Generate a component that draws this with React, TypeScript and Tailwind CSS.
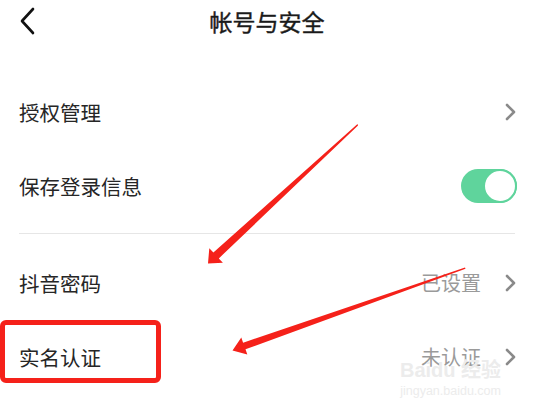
import React from "react";

const FONT = '"Noto Sans CJK SC", "Noto Sans", sans-serif';

function ChevronRight() {
  return (
    <svg width="14" height="18" viewBox="0 0 14 18" fill="none">
      <path d="M4 2 L11 9 L4 16" stroke="#8a8a8a" strokeWidth="2.6" strokeLinecap="round" strokeLinejoin="round" />
    </svg>
  );
}

function Toggle() {
  return (
    <div className="relative h-[34px] w-[56px] rounded-full bg-[#5fd49c]">
      <div className="absolute right-0 top-0 h-[34px] w-[34px] rounded-full border-[2px] border-[#5fd49c] bg-white" />
    </div>
  );
}

function Row({ label, value, right }: { label: string; value?: string; right: React.ReactNode }) {
  return (
    <div className="flex h-[74px] items-center justify-between pl-[19px] pr-[17px]">
      <span className="text-[20.5px] text-[#262626]">{label}</span>
      <div className="flex items-center gap-[22px]">
        {value && <span className="text-[20px] text-[#9a9a9a]">{value}</span>}
        {right}
      </div>
    </div>
  );
}

export default function App() {
  return (
    <div className="relative h-[406px] w-[534px] overflow-hidden bg-white" style={{ fontFamily: FONT }}>
      {/* Header */}
      <div className="relative flex h-[42px] items-center justify-center">
        <svg className="absolute left-[18px] top-[7px]" width="20" height="28" viewBox="0 0 20 28" fill="none">
          <path d="M15 2 L4 14 L15 26" stroke="#111" strokeWidth="2.6" strokeLinecap="round" strokeLinejoin="round" />
        </svg>
        <span className="text-[23px] text-[#1a1a1a] [-webkit-text-stroke:0.4px_#1a1a1a]">帐号与安全</span>
      </div>

      <div className="pt-[33px]">
        <Row label="授权管理" right={<ChevronRight />} />
        <Row label="保存登录信息" right={<Toggle />} />
        <div className="mx-[19px] mt-[10px] h-px bg-[#e6e6e6]" />
        <div className="pt-[12px]">
          <Row label="抖音密码" value="已设置" right={<ChevronRight />} />
          <Row label="实名认证" value="未认证" right={<ChevronRight />} />
        </div>
      </div>

      {/* Watermark */}
      <div className="pointer-events-none absolute left-[400px] top-[360px] flex flex-col items-center leading-none text-[#ececec]">
        <span className="text-[20px] font-bold" style={{ fontFamily: '"Liberation Sans", "Noto Sans CJK SC", sans-serif' }}>Baidu 经验</span>
        <span className="mt-[5px] text-[12.5px]" style={{ fontFamily: '"Liberation Sans", sans-serif' }}>jingyan.baidu.com</span>
      </div>

      {/* Annotation overlay */}
      <div className="pointer-events-none absolute left-0 top-[320px] h-[63px] w-[161px] rounded-[6px] border-[5px] border-[#f5211a]" />
      <svg className="pointer-events-none absolute left-0 top-0" width="534" height="406" viewBox="0 0 534 406">
        <polygon
          points="357.5,124 358,125.5 218.8,258.4 222.9,262.8 208,263.5 209.3,248.2 213.4,252.6"
          fill="#f5211a"
        />
        <polygon
          points="465,267.5 465.5,268.8 245.5,349.3 247.3,354.5 232.5,350.5 241.3,337.5 243.1,342.7"
          fill="#f5211a"
        />
      </svg>
    </div>
  );
}
